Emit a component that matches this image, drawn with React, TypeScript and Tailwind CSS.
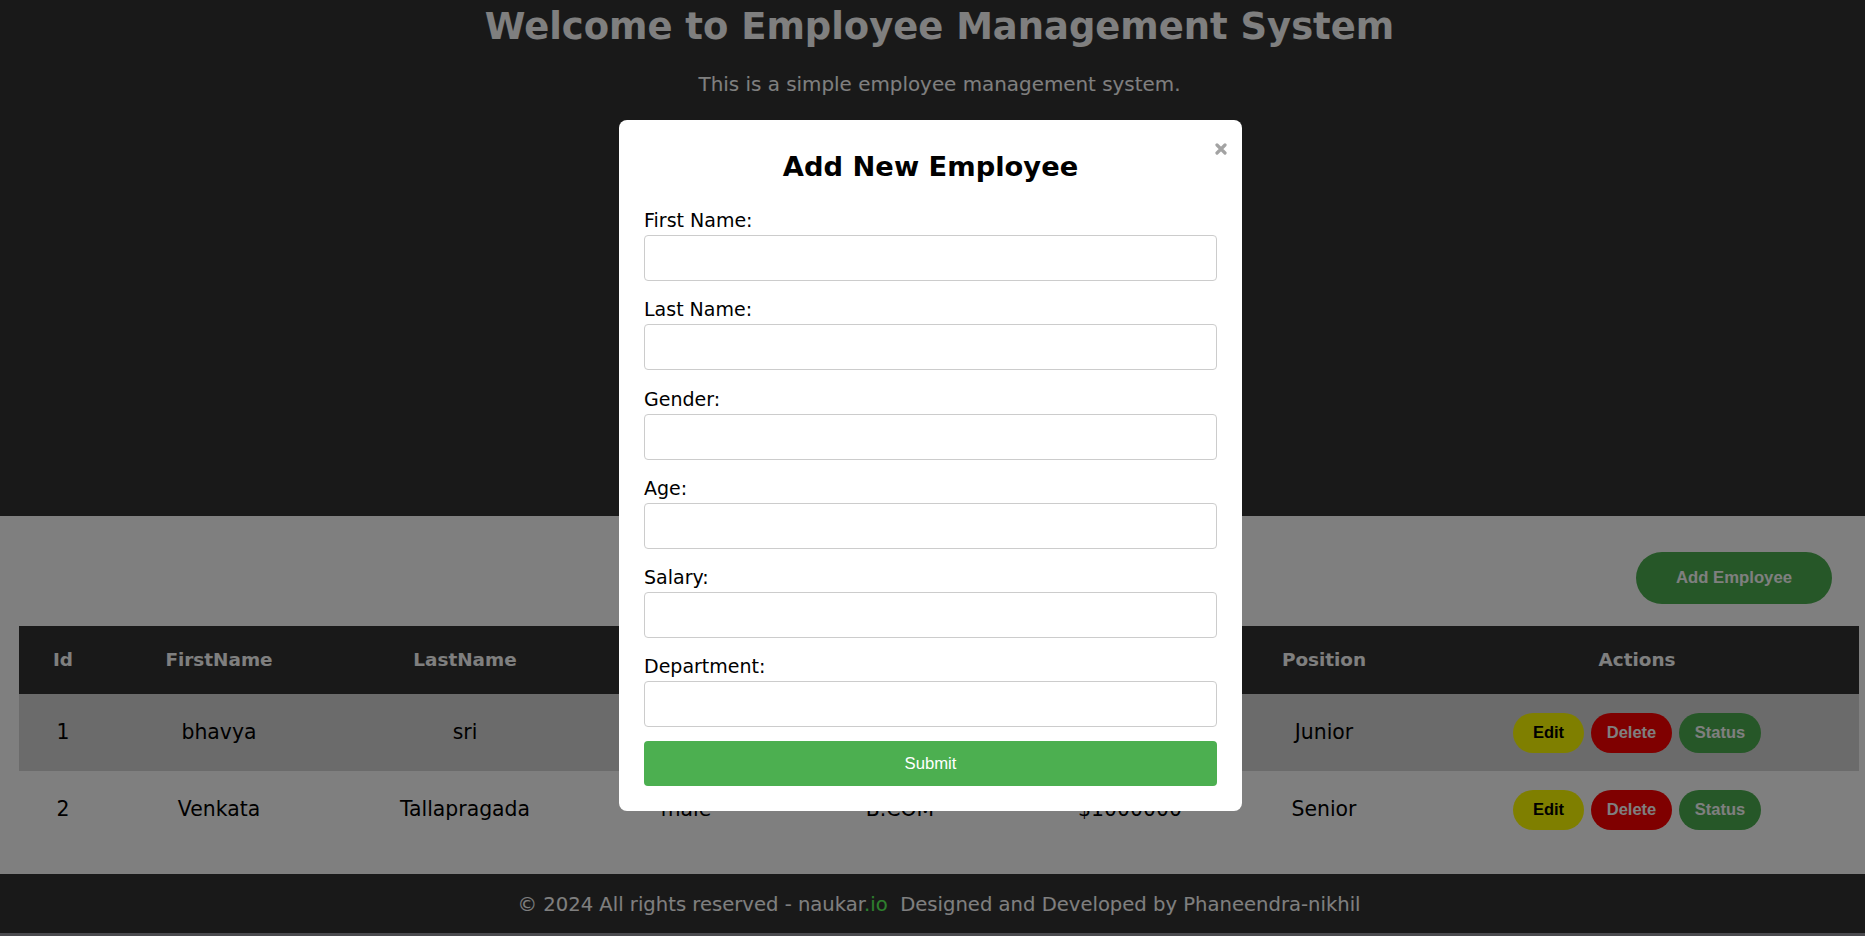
const employees = [
  { id: 1, firstName: "bhavya", lastName: "sri", gender: "female", department: "B.Tech", salary: "$500000", position: "Junior" },
  { id: 2, firstName: "Venkata", lastName: "Tallapragada", gender: "male", department: "B.COM", salary: "$1000000", position: "Senior" },
]

const columns = [
  { label: "Id", width: "w-[88px]" },
  { label: "FirstName", width: "w-[224px]" },
  { label: "LastName", width: "w-[268px]" },
  { label: "Gender", width: "w-[174px]" },
  { label: "Department", width: "w-[254px]" },
  { label: "Salary", width: "w-[206px]" },
  { label: "Position", width: "w-[182px]" },
  { label: "Actions", width: "w-[444px]" },
]

const fields = ["First Name:", "Last Name:", "Gender:", "Age:", "Salary:", "Department:"]

function ActionButtons() {
  return (
    <div className="flex justify-center gap-[7px] font-['Liberation_Sans',Arial,sans-serif] text-[16.5px] font-bold">
      <button className="h-[40px] w-[71px] rounded-full bg-[#ffff00] text-black">Edit</button>
      <button className="h-[40px] w-[81px] rounded-full bg-[#ff0000] text-white">Delete</button>
      <button className="h-[40px] w-[82px] rounded-full bg-[#4caf50] text-white">Status</button>
    </div>
  )
}

function AddEmployeeModal() {
  return (
    <div className="fixed left-[619px] top-[120px] z-20 w-[623px] rounded-[8px] bg-white px-[25px] pb-[25px] pt-[30px] text-black">
      <button className="absolute right-[15px] top-[23px] h-[12px] w-[12px]" aria-label="close">
        <svg viewBox="0 0 12 12" className="h-[12px] w-[12px]">
          <path d="M2 2 L10 10 M10 2 L2 10" stroke="#a3a3a3" strokeWidth="3.2" strokeLinecap="round" />
        </svg>
      </button>
      <h2 className="text-center text-[27.3px] font-bold leading-[34px]">Add New Employee</h2>
      <form className="mt-[24px]">
        <div className="flex flex-col gap-[16.3px]">
          {fields.map((field) => (
            <div key={field}>
              <label className="mb-[3px] block text-[19px] leading-[24px]">{field}</label>
              <input className="block h-[46px] w-full rounded-[4px] border border-[#ccc] bg-white" />
            </div>
          ))}
        </div>
        <button
          type="button"
          className="mt-[14px] block h-[45px] w-full rounded-[4px] bg-[#4caf50] font-['Liberation_Sans',Arial,sans-serif] text-[16.7px] text-white"
        >
          Submit
        </button>
      </form>
    </div>
  )
}

export default function App() {
  return (
    <div className="relative min-h-screen font-['DejaVu_Sans',sans-serif]">
      <header className="h-[516px] bg-[#333] pl-[14px] pt-[5px] text-center text-white">
        <h1 className="text-[36.9px] font-bold leading-[44px]">Welcome to Employee Management System</h1>
        <p className="mt-[23.6px] text-[19.9px] leading-[24px]">This is a simple employee management system.</p>
      </header>

      <main className="bg-white pb-[26px] pt-[36px]">
        <div className="flex justify-end pr-[33px]">
          <button className="h-[52px] w-[196px] rounded-full bg-[#4caf50] font-['Liberation_Sans',Arial,sans-serif] text-[16.7px] font-bold text-white">
            Add Employee
          </button>
        </div>
        <table className="ml-[19px] mt-[22px] w-[1840px] table-fixed border-collapse text-center">
          <thead>
            <tr className="h-[68px] bg-[#333] text-[18.4px] font-bold text-white">
              {columns.map((col) => (
                <th key={col.label} className={col.width}>
                  {col.label}
                </th>
              ))}
            </tr>
          </thead>
          <tbody className="text-[20.4px] text-black">
            {employees.map((emp, i) => (
              <tr key={emp.id} className={i % 2 === 0 ? "h-[77px] bg-[#d6d6d6]" : "h-[77px] bg-white"}>
                <td>{emp.id}</td>
                <td>{emp.firstName}</td>
                <td>{emp.lastName}</td>
                <td>{emp.gender}</td>
                <td>{emp.department}</td>
                <td>{emp.salary}</td>
                <td>{emp.position}</td>
                <td>
                  <ActionButtons />
                </td>
              </tr>
            ))}
          </tbody>
        </table>
      </main>

      <footer className="h-[59px] bg-[#333] pl-[13px] pt-[18.5px] text-center text-[19.6px] leading-[24px] text-white">
        © 2024 All rights reserved - naukar<span className="text-[#5cff5c]">.io</span>
        {"\u00a0 "}Designed and Developed by Phaneendra-nikhil
      </footer>
      <div className="h-[3px] bg-[#96969e]" />

      <div className="fixed inset-0 z-10 bg-black/50" />
      <AddEmployeeModal />
    </div>
  )
}
